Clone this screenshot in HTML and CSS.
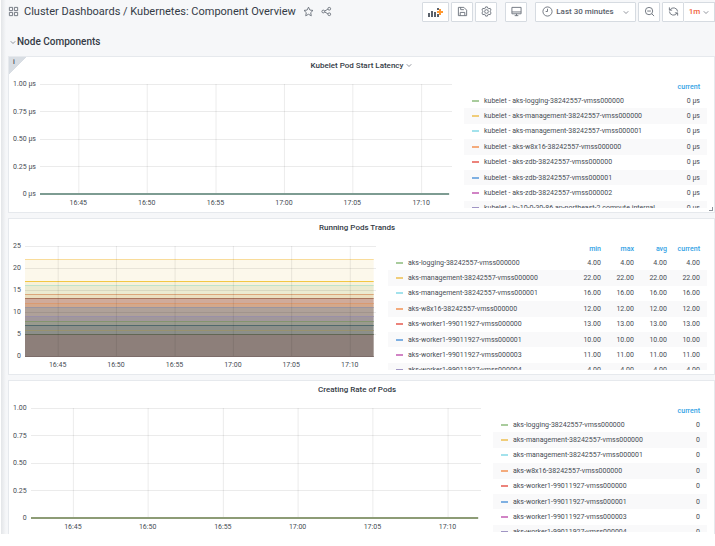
FILE: index.html
```
<!DOCTYPE html>
<html lang="en">
<head>
  <meta charset="UTF-8" />
  <meta name="viewport" content="width=device-width, initial-scale=1" />
  <title>Kubernetes: Component Overview</title>
  <link rel="stylesheet" href="styles.css">
</head>
<body>
  <div class="dashboard">
    <!-- Top toolbar -->
    <header class="toolbar">
      <svg class="icon" viewBox="0 0 24 24"><path d="M3 3h7v7H3zM14 3h7v7h-7zM3 14h7v7H3zM14 14h7v7h-7z"/></svg>
      <h1>Cluster Dashboards / Kubernetes: Component Overview</h1>
      <button class="icon-btn" aria-label="Star"><svg class="icon" viewBox="0 0 24 24"><path d="M12 2.500l3 6.300 6.800.900-5 4.800 1.300 6.900-6.100-3.400-6.100 3.400 1.300-6.900-5-4.800 6.800-.900z"/></svg></button>
      <button class="icon-btn" aria-label="Share"><svg class="icon" viewBox="0 0 24 24"><circle cx="5" cy="12" r="3"/><circle cx="18" cy="6" r="3"/><circle cx="18" cy="18" r="3"/><path d="M8 11l7-4M8 13l7 4"/></svg></button>

      <div class="actions">
        <button class="btn add" aria-label="Add panel"><svg viewBox="0 0 17 12"><path class="bars" d="M1 7h2v4H1zM4 5h2v6H4zM7 6h2v5H7zM10 2h2v2h-2zM10 8h2v3h-2z"/><path class="plus" d="M12 3h2v2h2v2h-2v2h-2V7h-2V5h2z"/></svg></button>
        <button class="btn" aria-label="Save"><svg class="icon" viewBox="0 0 24 24"><path d="M3 3h12l6 6v12H3zM8 3v5h7M7 21v-7h10v7"/></svg></button>
        <button class="btn" aria-label="Settings"><svg class="icon" viewBox="0 0 24 24"><path d="M10 2h4l1 3 2 1 3-1 2 4-2 2v2l2 2-2 4-3-1-2 1-1 3h-4l-1-3-2-1-3 1-2-4 2-2v-2L2 9l2-4 3 1 2-1z"/><circle cx="12" cy="12" r="4"/></svg></button>
        <button class="btn tv" aria-label="Cycle view mode"><svg class="icon" viewBox="0 0 24 24"><path d="M2 3h20v14H2zM2 13h20M8 21h8M12 17v4"/></svg></button>
        <button class="btn time"><svg class="icon" viewBox="0 0 24 24"><circle cx="12" cy="12" r="10"/><path d="M12 6v6H8"/></svg>Last 30 minutes<svg class="chevron" viewBox="0 0 8 8"><path d="M1 3l3 3 3-3"/></svg></button>
        <button class="btn" aria-label="Zoom out"><svg class="icon" viewBox="0 0 24 24"><circle cx="11" cy="11" r="8"/><path d="M17 17l5 5M7 11h8"/></svg></button>
        <div class="btn-group">
          <button class="btn" aria-label="Refresh"><svg class="icon" viewBox="0 0 24 24"><path d="M3 3v6h6M21 21v-6h-6M4 9a9 9 0 0 1 17 3M20 15a9 9 0 0 1-17-3"/></svg></button>
          <button class="btn interval">1m<svg class="chevron" viewBox="0 0 8 8"><path d="M1 3l3 3 3-3"/></svg></button>
        </div>
      </div>
    </header>

    <h2 class="row-title"><svg class="chevron" viewBox="0 0 8 8"><path d="M1 3l3 3 3-3"/></svg>Node Components</h2>

    <main class="panels">
      <section class="panel">
        <span class="info">i</span>
        <h3>Kubelet Pod Start Latency<svg class="chevron" viewBox="0 0 8 8"><path d="M1 3l3 3 3-3"/></svg></h3>
        <div class="panel-body">
          <div class="y-axis"><span>1.00 µs</span><span>0.75 µs</span><span>0.50 µs</span><span>0.25 µs</span><span>0 µs</span></div>
          <svg class="plot">
            <g class="grid">
              <rect y="3"/><rect y="30"/><rect y="58"/><rect y="85"/>
              <rect class="v" x="9.3%" y="3"/><rect class="v" x="25.9%" y="3"/><rect class="v" x="42.6%" y="3"/><rect class="v" x="59.2%" y="3"/><rect class="v" x="75.8%" y="3"/><rect class="v" x="92.5%" y="3"/>
            </g>
            <rect class="series zero-teal" y="112"/>
            <g class="ticks"><text x="9.3%" y="124">16:45</text><text x="25.9%" y="124">16:50</text><text x="42.6%" y="124">16:55</text><text x="59.2%" y="124">17:00</text><text x="75.8%" y="124">17:05</text><text x="92.5%" y="124">17:10</text></g>
          </svg>
          <div class="legend latency">
            <table>
              <thead><tr><th></th><th>current</th></tr></thead>
              <tbody>
                <tr><td><i class="green"></i>kubelet - aks-logging-38242557-vmss000000</td><td>0 µs</td></tr>
                <tr><td><i class="yellow"></i>kubelet - aks-management-38242557-vmss000000</td><td>0 µs</td></tr>
                <tr><td><i class="cyan"></i>kubelet - aks-management-38242557-vmss000001</td><td>0 µs</td></tr>
                <tr><td><i class="orange"></i>kubelet - aks-w8x16-38242557-vmss000000</td><td>0 µs</td></tr>
                <tr><td><i class="red"></i>kubelet - aks-zdb-38242557-vmss000000</td><td>0 µs</td></tr>
                <tr><td><i class="blue"></i>kubelet - aks-zdb-38242557-vmss000001</td><td>0 µs</td></tr>
                <tr><td><i class="pink"></i>kubelet - aks-zdb-38242557-vmss000002</td><td>0 µs</td></tr>
                <tr><td><i class="purple"></i>kubelet - ip-10-0-30-86.ap-northeast-2.compute.internal</td><td>0 µs</td></tr>
              </tbody>
            </table>
          </div>
        </div>
        <span class="resize"></span>
      </section>

      <section class="panel">
        <h3>Running Pods Trands</h3>
        <div class="panel-body">
          <div class="y-axis"><span>25</span><span>20</span><span>15</span><span>10</span><span>5</span><span>0</span></div>
          <svg class="plot">
            <!-- filled bands between neighbouring series, top to bottom -->
            <g class="bands">
              <rect y="16" height="22" fill="#fcf8eb"/>
              <rect y="38" height="5" fill="#f8f1d8"/>
              <rect y="43" height="8" fill="#ebebd1"/>
              <rect y="51" height="5" fill="#ebdfbf"/>
              <rect y="56" height="4" fill="#cfab9b"/>
              <rect y="60" height="5" fill="#d3a88b"/>
              <rect y="65" height="8" fill="#afa199"/>
              <rect y="73" height="5" fill="#a1979b"/>
              <rect y="78" height="4" fill="#999a8e"/>
              <rect y="82" height="9" fill="#8c8f8a"/>
              <rect y="91" height="23" fill="#8d7f7a"/>
            </g>
            <g class="lines">
              <rect y="16" fill="#f9dc9a"/>
              <rect y="38" fill="#f2c744"/>
              <rect y="42" fill="#bfe3cb"/>
              <rect y="51" fill="#dba67a"/>
              <rect y="55" fill="#a9745c"/>
              <rect y="60" fill="#d99a72"/>
              <rect y="64" fill="#9b95a0"/>
              <rect y="73" fill="#9a90a8"/>
              <rect y="78" fill="#84946f"/>
              <rect y="82" fill="#50696c"/>
              <rect y="87" fill="#99926e"/>
              <rect y="91" fill="#6b6f5b"/>
              <rect y="113" fill="#7c6c69"/>
            </g>
            <g class="grid">
              <rect y="3"/><rect y="25"/><rect y="47"/><rect y="69"/><rect y="91"/>
              <rect class="v" x="9.3%" y="3"/><rect class="v" x="25.9%" y="3"/><rect class="v" x="42.6%" y="3"/><rect class="v" x="59.2%" y="3"/><rect class="v" x="75.8%" y="3"/><rect class="v" x="92.5%" y="3"/>
            </g>
            <g class="ticks"><text x="9.3%" y="124">16:45</text><text x="25.9%" y="124">16:50</text><text x="42.6%" y="124">16:55</text><text x="59.2%" y="124">17:00</text><text x="75.8%" y="124">17:05</text><text x="92.5%" y="124">17:10</text></g>
          </svg>
          <div class="legend pods">
            <table>
              <thead><tr><th></th><th>min</th><th>max</th><th>avg</th><th>current</th></tr></thead>
              <tbody>
                <tr><td><i class="green"></i>aks-logging-38242557-vmss000000</td><td>4.00</td><td>4.00</td><td>4.00</td><td>4.00</td></tr>
                <tr><td><i class="yellow"></i>aks-management-38242557-vmss000000</td><td>22.00</td><td>22.00</td><td>22.00</td><td>22.00</td></tr>
                <tr><td><i class="cyan"></i>aks-management-38242557-vmss000001</td><td>16.00</td><td>16.00</td><td>16.00</td><td>16.00</td></tr>
                <tr><td><i class="orange"></i>aks-w8x16-38242557-vmss000000</td><td>12.00</td><td>12.00</td><td>12.00</td><td>12.00</td></tr>
                <tr><td><i class="red"></i>aks-worker1-99011927-vmss000000</td><td>13.00</td><td>13.00</td><td>13.00</td><td>13.00</td></tr>
                <tr><td><i class="blue"></i>aks-worker1-99011927-vmss000001</td><td>10.00</td><td>10.00</td><td>10.00</td><td>10.00</td></tr>
                <tr><td><i class="pink"></i>aks-worker1-99011927-vmss000003</td><td>11.00</td><td>11.00</td><td>11.00</td><td>11.00</td></tr>
                <tr><td><i class="purple"></i>aks-worker1-99011927-vmss000004</td><td>4.00</td><td>4.00</td><td>4.00</td><td>4.00</td></tr>
              </tbody>
            </table>
          </div>
        </div>
      </section>

      <section class="panel">
        <h3>Creating Rate of Pods</h3>
        <div class="panel-body">
          <div class="y-axis"><span>1.00</span><span>0.75</span><span>0.50</span><span>0.25</span><span>0</span></div>
          <svg class="plot">
            <g class="grid">
              <rect y="3"/><rect y="30"/><rect y="58"/><rect y="85"/>
              <rect class="v" x="9.3%" y="3"/><rect class="v" x="25.9%" y="3"/><rect class="v" x="42.6%" y="3"/><rect class="v" x="59.2%" y="3"/><rect class="v" x="75.8%" y="3"/><rect class="v" x="92.5%" y="3"/>
            </g>
            <rect class="series zero-olive" y="112"/>
            <g class="ticks"><text x="9.3%" y="124">16:45</text><text x="25.9%" y="124">16:50</text><text x="42.6%" y="124">16:55</text><text x="59.2%" y="124">17:00</text><text x="75.8%" y="124">17:05</text><text x="92.5%" y="124">17:10</text></g>
          </svg>
          <div class="legend rate">
            <table>
              <thead><tr><th></th><th>current</th></tr></thead>
              <tbody>
                <tr><td><i class="green"></i>aks-logging-38242557-vmss000000</td><td>0</td></tr>
                <tr><td><i class="yellow"></i>aks-management-38242557-vmss000000</td><td>0</td></tr>
                <tr><td><i class="cyan"></i>aks-management-38242557-vmss000001</td><td>0</td></tr>
                <tr><td><i class="orange"></i>aks-w8x16-38242557-vmss000000</td><td>0</td></tr>
                <tr><td><i class="red"></i>aks-worker1-99011927-vmss000000</td><td>0</td></tr>
                <tr><td><i class="blue"></i>aks-worker1-99011927-vmss000001</td><td>0</td></tr>
                <tr><td><i class="pink"></i>aks-worker1-99011927-vmss000003</td><td>0</td></tr>
                <tr><td><i class="purple"></i>aks-worker1-99011927-vmss000004</td><td>0</td></tr>
              </tbody>
            </table>
          </div>
        </div>
      </section>
    </main>
  </div>
</body>
</html>
```
FILE: styles.css
```
* {
  box-sizing: border-box;
}

body {
  margin: 0;
  height: 100vh;
  padding: 0 0 12px 1px;
  background: #fff;
  font-family: Roboto, "Liberation Sans", sans-serif;
  font-size: 7px;
  color: #464c54;
}

h1, h2, h3 {
  margin: 0;
  color: #343b46;
}

.dashboard {
  height: 100%;
  overflow: hidden;
  padding-left: 7px;
  background: linear-gradient(to right, #e3e5e8, #f6f7f9 5px);
}

/* ---------- toolbar ---------- */
.toolbar {
  display: flex;
  align-items: center;
  height: 23px;
}

.toolbar h1 {
  margin: 0 7px 0 5px;
  font-size: 11px;
  font-weight: 400;
  white-space: nowrap;
}

.icon {
  width: 11px;
  height: 11px;
  fill: none;
  stroke: #6b727c;
  stroke-width: 2;
  flex: none;
}

.icon-btn {
  display: flex;
  padding: 0;
  margin-right: 7px;
  border: none;
  background: none;
}

.actions {
  display: flex;
  gap: 2px;
  margin-left: auto;
}

.btn {
  display: flex;
  align-items: center;
  justify-content: center;
  width: 22px;
  height: 20px;
  padding: 0;
  border: 1px solid #d6dbe1;
  border-radius: 1px;
  background: #fff;
  font-family: inherit;
  font-size: 8px;
  font-weight: 500;
  color: #5a616b;
}

.btn.add {
  width: 27px;
}

.add svg {
  width: 17px;
  height: 12px;
}

.bars {
  fill: #5a616b;
}

.plus {
  fill: #ff9830;
}

.btn.tv {
  margin: 0 6px;
}

.btn.time {
  width: 101px;
  gap: 3px;
}

.time .chevron {
  margin-left: 6px;
}

.btn-group {
  display: flex;
}

.btn.interval {
  width: 31px;
  border-left: none;
  gap: 3px;
  color: #f0643c;
}

.chevron {
  width: 6px;
  height: 6px;
  fill: none;
  stroke: #6b727c;
  stroke-width: 1;
}

.row-title {
  display: flex;
  align-items: center;
  gap: 1px;
  height: 37px;
  padding-left: 2px;
  font-size: 10px;
  font-weight: 500;
}

/* ---------- panels ---------- */
.panels {
  display: flex;
  flex-direction: column;
  gap: 5px;
  margin-top: -4px;
}

.panel {
  position: relative;
  padding: 0 7px 4px 4px;
  border: 1px solid #e6e9ed;
  background: #fff;
}

.panel h3 {
  display: flex;
  align-items: center;
  justify-content: center;
  gap: 3px;
  height: 16px;
  margin-bottom: 8px;
  padding-right: 6px;
  font-size: 8px;
  font-weight: 500;
}

/* the menu arrow hangs outside the centred title */
.panel h3 .chevron {
  margin-right: -9px;
}

.info {
  position: absolute;
  top: 0;
  left: 0;
  width: 17px;
  height: 17px;
  padding: 1px 4px;
  background: linear-gradient(135deg, #d8dde3 50%, transparent 50%);
  font-weight: 500;
}

.resize {
  position: absolute;
  right: 1px;
  bottom: 1px;
  width: 4px;
  height: 4px;
  border: solid #8e949c;
  border-width: 0 1px 1px 0;
}

.panel-body {
  display: flex;
  height: 127px;
}

.y-axis {
  display: flex;
  flex-direction: column;
  justify-content: space-between;
  height: 116px;
  margin-right: 4px;
  line-height: 6px;
  text-align: right;
  white-space: nowrap;
}

/* ---------- graphs ---------- */
.plot {
  flex: 1;
  min-width: 0;
  height: 127px;
  margin-right: 12px;
}

.grid rect {
  width: 100%;
  height: 1px;
  fill: #000;
  fill-opacity: 0.08;
}

.grid .v {
  width: 1px;
  height: 110px;
}

.series {
  width: 99.3%;
  height: 2px;
}

.zero-teal {
  fill: #7d9c92;
}

.zero-olive {
  fill: #8d9c76;
}

.bands rect,
.lines rect {
  width: 99.3%;
}

.lines rect {
  height: 1px;
}

.ticks text {
  fill: #464c54;
  text-anchor: middle;
}

/* ---------- legends ---------- */
.legend {
  flex: none;
  overflow: hidden;
}

.latency {
  width: 243px;
}

.pods {
  width: 319px;
}

.rate {
  width: 214px;
}

.legend table {
  width: 100%;
  height: 135px;
  border-collapse: collapse;
  white-space: nowrap;
}

.legend th {
  height: 12px;
  padding: 0 7px 0 0;
  font-weight: 500;
  color: #33a2e5;
  text-align: right;
}

.legend td {
  height: 15px;
  padding: 0 7px 0 0;
  text-align: right;
}

.legend td:first-child {
  padding-left: 8px;
  text-align: left;
}

.pods th:not(:first-child) {
  width: 33px;
}

.legend tbody tr:nth-child(even) {
  background: #f9f9fa;
}

.legend i {
  display: inline-block;
  width: 7px;
  height: 2px;
  margin-right: 5px;
  vertical-align: 1px;
}

.green { background: #a9cc9d; }
.yellow { background: #f0cd7a; }
.cyan { background: #a3e2ec; }
.orange { background: #f4ab7c; }
.red { background: #ec837b; }
.blue { background: #7fb0e2; }
.pink { background: #d184c5; }
.purple { background: #a095c4; }
```
